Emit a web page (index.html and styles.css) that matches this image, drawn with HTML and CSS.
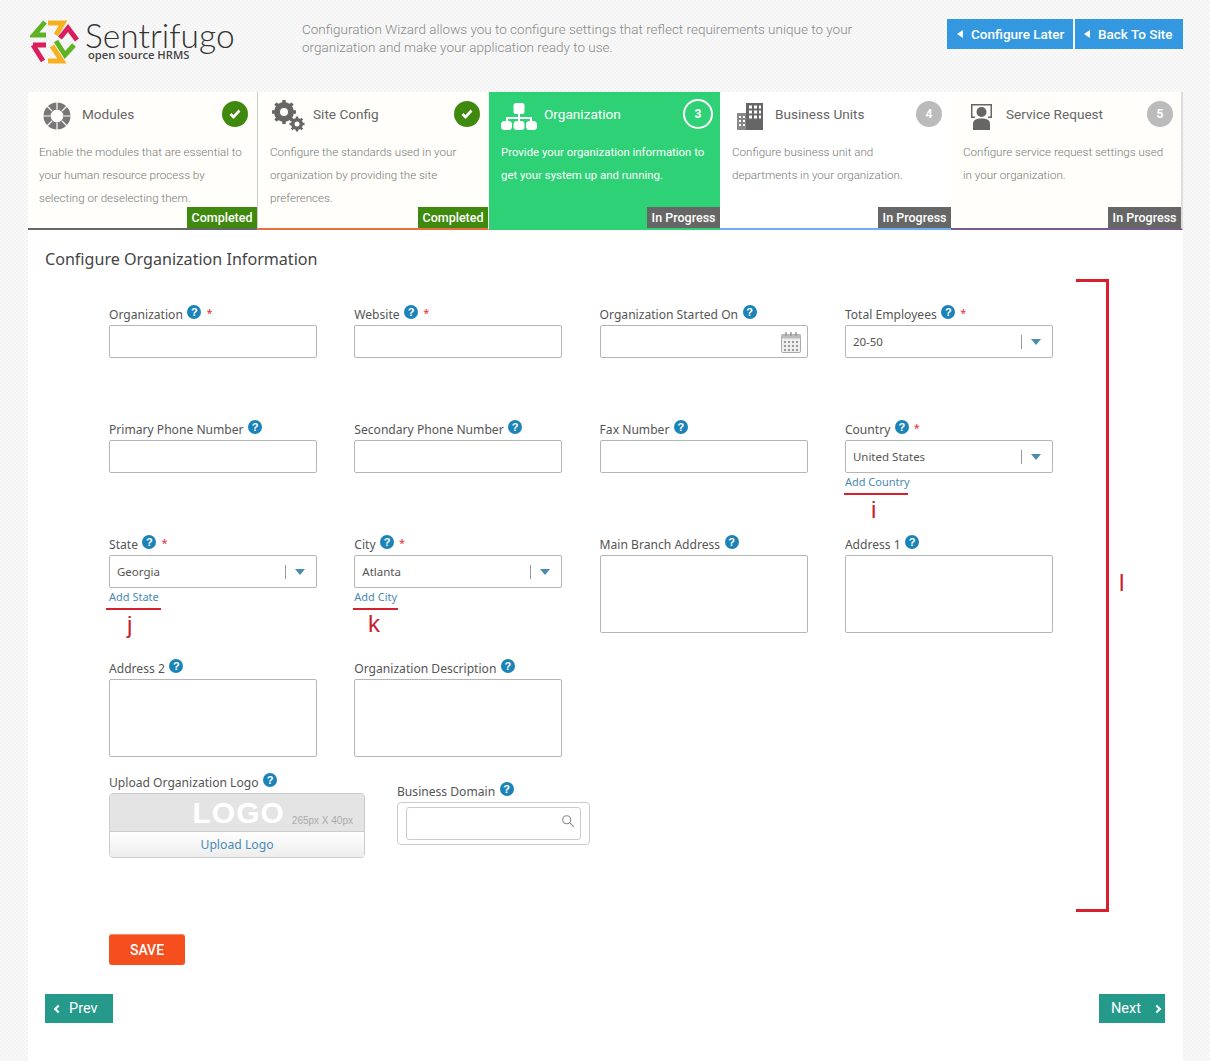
FILE: index.html
```html
<!DOCTYPE html>
<html lang="en">
<head>
    <meta charset="UTF-8">
    <title>Sentrifugo - Configuration Wizard</title>
    <link rel="stylesheet" href="styles.css">
</head>
<body>
    <!-- top bar -->
    <header class="topbar">
        <div class="logo">
            <svg class="logo-mark" width="50" height="44" viewBox="0 0 50 44" fill="none" stroke-width="5">
                <path d="M15 2 L4 15 H16" stroke="#5fb322"/>
                <path d="M18 3 H33 L26 15" stroke="#f7b021"/>
                <path d="M30 18 L38 8 L47 20" stroke="#d81e5b"/>
                <path d="M26 21 L35 35 L44 25" stroke="#5fb322"/>
                <path d="M3 25 H16 M3 25 L13 41" stroke="#d81e5b"/>
                <path d="M22 26 L32 41 H18" stroke="#f7b021"/>
            </svg>
            <div class="logo-text">
                <span class="logo-name">Sentrifugo</span>
                <span class="logo-sub">open source HRMS</span>
            </div>
        </div>
        <p class="intro">Configuration Wizard allows you to configure settings that reflect requirements unique to your organization and make your application ready to use.</p>
        <div class="top-buttons">
            <a class="top-btn top-btn-later">Configure Later</a>
            <a class="top-btn top-btn-back">Back To Site</a>
        </div>
    </header>

    <main class="wrap">
        <!-- wizard steps -->
        <div class="steps">
            <div class="step step-1">
                <div class="step-head">
                    <svg class="step-icon" width="28" height="28" viewBox="0 0 28 28" fill="none">
                        <circle cx="14" cy="14" r="10" stroke="#777" stroke-width="7"/>
                        <path d="M14 0V7M14 21V28M0 14H7M21 14H28M4 4L9 9M19 19L24 24M24 4L19 9M9 19L4 24" stroke="#fffefa" stroke-width="1.2"/>
                    </svg>
                    <span class="step-title">Modules</span>
                    <span class="step-num done">
                        <svg width="12" height="10" viewBox="0 0 12 10" fill="none"><path d="M1.5 5L4.5 8L10.5 1.5" stroke="#fff" stroke-width="2.6"/></svg>
                    </span>
                </div>
                <p class="step-text">Enable the modules that are essential to your human resource process by selecting or deselecting them.</p>
                <span class="badge badge-done">Completed</span>
            </div>
            <div class="step step-2">
                <div class="step-head">
                    <svg class="step-icon" width="36" height="32" viewBox="0 0 36 32" fill="none">
                        <circle cx="14" cy="12" r="7.5" stroke="#666" stroke-width="5"/>
                        <path d="M14 0V24M2 12H26M5.5 3.500L22.500 20.500M22.500 3.500L5.500 20.500" stroke="#666" stroke-width="3.500"/>
                        <circle cx="14" cy="12" r="4" fill="#fffefa"/>
                        <circle cx="27" cy="24" r="4.500" stroke="#666" stroke-width="3"/>
                        <path d="M27 16.500V31.500M19.500 24H34.500M21.700 18.700L32.300 29.300M32.300 18.700L21.700 29.300" stroke="#666" stroke-width="2.400"/>
                        <circle cx="27" cy="24" r="2.500" fill="#fffefa"/>
                    </svg>
                    <span class="step-title">Site Config</span>
                    <span class="step-num done">
                        <svg width="12" height="10" viewBox="0 0 12 10" fill="none"><path d="M1.5 5L4.5 8L10.5 1.5" stroke="#fff" stroke-width="2.6"/></svg>
                    </span>
                </div>
                <p class="step-text">Configure the standards used in your organization by providing the site preferences.</p>
                <span class="badge badge-done">Completed</span>
            </div>
            <div class="step step-3">
                <div class="step-head">
                    <svg class="step-icon" width="36" height="27" viewBox="0 0 36 27" fill="#fff">
                        <rect x="12.500" y="0" width="11" height="11" rx="2.500"/>
                        <path d="M17 10H19V14H31V19H29V16H19V19H17V16H7V19H5V14H17Z"/>
                        <rect x="0" y="18" width="11" height="9" rx="3.500"/>
                        <rect x="12.500" y="18" width="11" height="9" rx="3.500"/>
                        <rect x="25" y="18" width="11" height="9" rx="3.500"/>
                    </svg>
                    <span class="step-title">Organization</span>
                    <span class="step-num current">3</span>
                </div>
                <p class="step-text">Provide your organization information to get your system up and running.</p>
                <span class="badge">In Progress</span>
            </div>
            <div class="step step-4">
                <div class="step-head">
                    <svg class="step-icon" width="26" height="27" viewBox="0 0 26 27">
                        <rect x="0" y="10" width="10" height="17" fill="#888"/>
                        <rect x="9" y="0" width="17" height="27" fill="#666"/>
                        <path d="M12 2.500h3v3h-3zM17 2.500h3v3h-3zM22 2.500h2v3h-2zM12 7.500h3v3h-3zM17 7.500h3v3h-3zM22 7.500h2v3h-2zM12 12.500h3v3h-3zM17 12.500h3v3h-3zM22 12.500h2v3h-2zM2 13h2v2h-2zM6 13h2v2h-2zM2 17h2v2h-2zM6 17h2v2h-2zM2 21h2v2h-2zM6 21h2v2h-2z" fill="#fff"/>
                    </svg>
                    <span class="step-title">Business Units</span>
                    <span class="step-num">4</span>
                </div>
                <p class="step-text">Configure business unit and departments in your organization.</p>
                <span class="badge">In Progress</span>
            </div>
            <div class="step step-5">
                <div class="step-head">
                    <svg class="step-icon" width="23" height="27" viewBox="0 0 23 27">
                        <path d="M1 1H22V15H18V13.500H20.500V2.500H2.500V13.500H5V15H1Z" fill="#666"/>
                        <circle cx="11.500" cy="9" r="5" fill="#666"/>
                        <path d="M3 27V21C3 17 6 15.500 11.500 15.500S20 17 20 21V27Z" fill="#666"/>
                    </svg>
                    <span class="step-title">Service Request</span>
                    <span class="step-num">5</span>
                </div>
                <p class="step-text">Configure service request settings used in your organization.</p>
                <span class="badge">In Progress</span>
            </div>
        </div>

        <h2 class="form-title">Configure Organization Information</h2>

        <form class="form-grid">
            <div class="field">
                <label class="lbl">Organization <i class="help">?</i> <b class="req">*</b></label>
                <input class="txt" type="text">
            </div>
            <div class="field">
                <label class="lbl">Website <i class="help">?</i> <b class="req">*</b></label>
                <input class="txt" type="text">
            </div>
            <div class="field">
                <label class="lbl">Organization Started On <i class="help">?</i></label>
                <div class="date-box">
                    <svg width="20" height="22" viewBox="0 0 20 22" fill="none">
                        <rect x="0.500" y="3.500" width="19" height="18" rx="1" fill="#eee" stroke="#aaa"/>
                        <rect x="0.500" y="3.500" width="19" height="4" fill="#bbb"/>
                        <path d="M5 1V5M10 1V5M15 1V5" stroke="#999" stroke-width="1.500"/>
                        <path d="M3 10h2v2H3zM7 10h2v2H7zM11 10h2v2h-2zM15 10h2v2h-2zM3 14h2v2H3zM7 14h2v2H7zM11 14h2v2h-2zM15 14h2v2h-2zM3 18h2v2H3zM7 18h2v2H7zM11 18h2v2h-2zM15 18h2v2h-2z" fill="#999"/>
                    </svg>
                </div>
            </div>
            <div class="field">
                <label class="lbl">Total Employees <i class="help">?</i> <b class="req">*</b></label>
                <div class="sel"><span>20-50</span><i class="sel-arrow"></i></div>
            </div>

            <div class="field">
                <label class="lbl">Primary Phone Number <i class="help">?</i></label>
                <input class="txt" type="text">
            </div>
            <div class="field">
                <label class="lbl">Secondary Phone Number <i class="help">?</i></label>
                <input class="txt" type="text">
            </div>
            <div class="field">
                <label class="lbl">Fax Number <i class="help">?</i></label>
                <input class="txt" type="text">
            </div>
            <div class="field">
                <label class="lbl">Country <i class="help">?</i> <b class="req">*</b></label>
                <div class="sel"><span>United States</span><i class="sel-arrow"></i></div>
                <a class="add-link">Add Country</a>
            </div>

            <div class="field">
                <label class="lbl">State <i class="help">?</i> <b class="req">*</b></label>
                <div class="sel"><span>Georgia</span><i class="sel-arrow"></i></div>
                <a class="add-link">Add State</a>
            </div>
            <div class="field">
                <label class="lbl">City <i class="help">?</i> <b class="req">*</b></label>
                <div class="sel"><span>Atlanta</span><i class="sel-arrow"></i></div>
                <a class="add-link">Add City</a>
            </div>
            <div class="field">
                <label class="lbl">Main Branch Address <i class="help">?</i></label>
                <textarea class="area"></textarea>
            </div>
            <div class="field">
                <label class="lbl">Address 1 <i class="help">?</i></label>
                <textarea class="area"></textarea>
            </div>

            <div class="field">
                <label class="lbl">Address 2 <i class="help">?</i></label>
                <textarea class="area"></textarea>
            </div>
            <div class="field">
                <label class="lbl">Organization Description <i class="help">?</i></label>
                <textarea class="area"></textarea>
            </div>
        </form>

        <div class="upload-row">
            <div class="upload-field">
                <label class="lbl">Upload Organization Logo <i class="help">?</i></label>
                <div class="upload-box">
                    <div class="upload-top"><span class="upload-logo">LOGO</span><span class="upload-size">265px X 40px</span></div>
                    <a class="upload-link">Upload Logo</a>
                </div>
            </div>
            <div class="domain-field">
                <label class="lbl">Business Domain <i class="help">?</i></label>
                <div class="domain-box">
                    <div class="domain-input">
                        <svg width="12" height="12" viewBox="0 0 12 12" fill="none" stroke="#888" stroke-width="1.100"><circle cx="4.700" cy="4.700" r="4"/><path d="M7.700 7.700L11.700 11.700"/></svg>
                    </div>
                </div>
            </div>
        </div>

        <button class="save-btn" type="button">SAVE</button>

        <div class="nav-row">
            <a class="nav-btn nav-prev"><span class="chev chev-left"></span>Prev</a>
            <a class="nav-btn nav-next">Next<span class="chev chev-right"></span></a>
        </div>
    </main>

    <!-- red markup drawn on top of the screenshot -->
    <div class="mark-line mark-i"></div>
    <span class="mark-letter letter-i">i</span>
    <div class="mark-line mark-j"></div>
    <span class="mark-letter letter-j">j</span>
    <div class="mark-line mark-k"></div>
    <span class="mark-letter letter-k">k</span>
    <div class="mark-bracket"></div>
    <span class="mark-letter letter-l">l</span>
</body>
</html>
```

FILE: styles.css
```css
* {
    box-sizing: border-box;
}
body {
    margin: 0;
    position: relative;
    height: 1061px;
    overflow: hidden;
    font-family: "Noto Sans", sans-serif;
    background-color: #f6f6f6;
    background-image: repeating-conic-gradient(#f3f3f3 0 25%, #f9f9f9 0 50%);
    background-size: 4px 4px;
}

/* top bar */
.topbar {
    display: flex;
    height: 92px;
    padding-left: 30px;
}
.logo {
    display: flex;
    width: 272px;
    padding-top: 20px;
}
.logo-mark {
    flex: none;
}
.logo-text {
    display: flex;
    flex-direction: column;
    margin: 1px 0 0 5px;
}
.logo-name {
    font-family: "Lato", sans-serif;
    font-weight: 300;
    font-size: 33.5px;
    line-height: 28px;
    color: #333;
}
.logo-sub {
    font-family: "Open Sans", sans-serif;
    font-weight: 600;
    font-size: 11.2px;
    line-height: 12px;
    margin-left: 3px;
    color: #444;
}
.intro {
    width: 570px;
    margin: 20px 0 0;
    font-family: "Roboto", sans-serif;
    font-weight: 300;
    font-size: 13.5px;
    line-height: 18px;
    color: #888;
}
.top-buttons {
    display: flex;
    gap: 2px;
    margin: 19px 0 0 75px;
}
.top-btn {
    display: flex;
    align-items: center;
    height: 30px;
    background-color: #3498e0;
    color: #fff;
    font-family: "Roboto", sans-serif;
    font-weight: 500;
    font-size: 13.5px;
}
.top-btn::before {
    content: "";
    border-style: solid;
    border-width: 4px 6px 4px 0;
    border-color: transparent #fff transparent transparent;
    margin-right: 8px;
}
.top-btn-later {
    width: 126px;
    padding-left: 10px;
}
.top-btn-back {
    width: 108px;
    padding-left: 9px;
}

/* main white panel */
.wrap {
    width: 1155px;
    height: 969px;
    margin-left: 28px;
    background-color: #fff;
}

/* steps */
.steps {
    display: flex;
    height: 138px;
    font-family: "Roboto", sans-serif;
}
.step {
    position: relative;
    padding-left: 12px;
    background-color: #fffefa;
    border-bottom: 2px solid #666;
}
.step-1 {
    width: 230px;
    padding-left: 11px;
    border-right: 1px solid #ccc;
}
.step-2 {
    width: 231px;
    border-right: 1px solid #fffefa;
    border-bottom-color: #e8703a;
}
.step-3 {
    width: 231px;
    background-color: #2ed176;
    border-bottom-color: #2ed176;
}
.step-4 {
    width: 231px;
    background-color: #fff;
    border-bottom-color: #6cb0ef;
}
.step-5 {
    width: 232px;
    border-right: 2px solid #ddd;
    border-bottom-color: #7a5a8a;
}
.step-head {
    display: flex;
    align-items: center;
    height: 44px;
}
.step-icon {
    margin-top: 4px;
}
.step-1 .step-head {
    padding-left: 4px;
}
.step-1 .step-icon {
    margin-right: 11px;
}
.step-2 .step-icon {
    margin-right: 7px;
}
.step-3 .step-icon {
    margin-right: 7px;
}
.step-4 .step-head {
    padding-left: 5px;
}
.step-4 .step-icon {
    margin-right: 12px;
}
.step-5 .step-head {
    padding-left: 7px;
}
.step-5 .step-icon {
    margin-right: 13px;
}
.step-title {
    flex: 1;
    font-size: 13.6px;
    color: #666;
}
.step-num {
    display: flex;
    align-items: center;
    justify-content: center;
    flex: none;
    width: 26px;
    height: 26px;
    margin-right: 8px;
    border-radius: 50%;
    background-color: #bbb;
    color: #fff;
    font-size: 12px;
    font-weight: 700;
}
.step-4 .step-num {
    margin-right: 9px;
}
.step-1 .step-num {
    margin-right: 9px;
}
.step-num.done {
    background-color: #3f8a0e;
}
.step-num.current {
    width: 30px;
    height: 30px;
    margin-right: 7px;
    background: none;
    border: 2px solid #fff;
}
.step-text {
    margin: 5px 0 0;
    padding-right: 8px;
    font-weight: 300;
    font-size: 11.6px;
    line-height: 23px;
    color: #777;
}
.step-3 .step-title,
.step-3 .step-text {
    color: #fff;
}
.step-3 .step-text {
    font-size: 11.4px;
    font-weight: 400;
}
.step-4 .step-text {
    padding-right: 40px;
}
.badge {
    position: absolute;
    right: 0;
    bottom: 0;
    height: 21px;
    padding: 0 4.5px;
    background-color: #666;
    color: #fff;
    font-size: 12.500px;
    font-weight: 500;
    line-height: 22px;
}
.badge-done {
    background-color: #3f8a0e;
}

/* form */
.form-title {
    margin: 17px 0 35px 17px;
    font-size: 16.1px;
    font-weight: 400;
    line-height: 24px;
    color: #444;
}
.form-grid {
    display: grid;
    grid-template-columns: repeat(4, 208px);
    grid-template-rows: 115px 115px 124px 114px;
    column-gap: 37.3px;
    margin-left: 81px;
}
.lbl {
    display: flex;
    height: 19px;
    font-size: 12.1px;
    line-height: 17px;
    color: #555;
    white-space: nowrap;
}
.help {
    display: block;
    flex: none;
    width: 14px;
    height: 14px;
    margin: -1px 0 0 4.5px;
    border-radius: 50%;
    background-color: #1b83b8;
    color: #fff;
    font-family: "Liberation Sans", sans-serif;
    font-style: normal;
    font-weight: 700;
    font-size: 11px;
    line-height: 14px;
    text-align: center;
}
.req {
    margin-left: 5px;
    color: #e0303a;
    font-size: 11px;
    font-weight: 400;
    line-height: 14px;
}
.txt,
.sel,
.date-box,
.area {
    display: block;
    width: 208px;
    height: 33px;
    border: 1px solid #b5b5b5;
    border-radius: 2px;
    background-color: #fff;
    margin: 0;
}
.area {
    height: 78px;
    resize: none;
}
.date-box {
    display: flex;
    align-items: center;
    justify-content: flex-end;
    padding-right: 6px;
}
.sel {
    display: flex;
    align-items: center;
    padding-left: 7px;
    font-size: 11.5px;
    color: #555;
}
.sel span {
    flex: 1;
}
.sel-arrow {
    display: block;
    position: relative;
    width: 1px;
    height: 14px;
    margin-right: 30px;
    background-color: #999;
}
.sel-arrow::after {
    content: "";
    position: absolute;
    left: 10px;
    top: 4px;
    border-style: solid;
    border-width: 6px 5px 0;
    border-color: #4a8cab transparent transparent;
}
.add-link {
    display: block;
    margin-top: 1px;
    font-size: 11px;
    line-height: 16px;
    color: #4a8ab5;
}

/* upload + domain row */
.upload-row {
    display: flex;
    margin-left: 81px;
}
.upload-field {
    width: 288px;
}
.upload-box {
    width: 256px;
    height: 65px;
    border: 1px solid #ccc;
    border-radius: 4px;
    overflow: hidden;
}
.upload-top {
    display: flex;
    align-items: flex-end;
    justify-content: flex-end;
    height: 38px;
    padding-right: 11px;
    background-color: #e4e4e4;
    border-bottom: 1px solid #ccc;
}
.upload-logo {
    font-family: "Liberation Sans", sans-serif;
    font-weight: 700;
    font-size: 30px;
    line-height: 36px;
    letter-spacing: 1px;
    color: #fff;
    margin-right: 7px;
}
.upload-size {
    font-family: "Liberation Sans", sans-serif;
    font-size: 10px;
    line-height: 20px;
    color: #aaa;
}
.upload-link {
    display: block;
    height: 26px;
    font-size: 12.2px;
    line-height: 25px;
    text-align: center;
    color: #4a8ab5;
    background: linear-gradient(#fff, #ececec);
}
.domain-field {
    margin-top: 9px;
}
.domain-box {
    width: 193px;
    height: 43px;
    padding: 4px 8px;
    border: 1px solid #ccc;
    border-radius: 4px;
}
.domain-input {
    display: flex;
    align-items: center;
    justify-content: flex-end;
    height: 33px;
    padding: 0 6px 5px 0;
    border: 1px solid #ccc;
    border-radius: 3px;
}

/* buttons */
.save-btn {
    display: block;
    width: 76px;
    height: 31px;
    margin: 76px 0 0 81px;
    border: 0;
    border-top: 1px solid #f58a64;
    border-radius: 3px;
    background-color: #f44f1d;
    color: #fff;
    font-family: "Roboto", sans-serif;
    font-weight: 500;
    font-size: 14px;
}
.nav-row {
    display: flex;
    justify-content: space-between;
    margin: 29px 18px 0 17px;
}
.nav-btn {
    display: flex;
    align-items: center;
    height: 29px;
    background-color: #25998a;
    color: #fff;
    font-family: "Roboto", sans-serif;
    font-size: 14.5px;
}
.nav-prev {
    width: 68px;
    padding-left: 10px;
    gap: 8px;
}
.nav-next {
    width: 66px;
    padding: 0 5px 0 12px;
    justify-content: space-between;
}
.chev {
    display: block;
    width: 6px;
    height: 6px;
    border-top: 2px solid #fff;
}
.chev-left {
    border-left: 2px solid #fff;
    transform: rotate(-45deg);
}
.chev-right {
    border-right: 2px solid #fff;
    transform: rotate(45deg);
}

/* red markup */
.mark-line {
    position: absolute;
    height: 2px;
    background-color: #d81f2e;
}
.mark-i {
    left: 844px;
    top: 493px;
    width: 64px;
}
.mark-j {
    left: 106px;
    top: 608px;
    width: 55px;
}
.mark-k {
    left: 353px;
    top: 608px;
    width: 45px;
}
.mark-bracket {
    position: absolute;
    left: 1076px;
    top: 279px;
    width: 33px;
    height: 633px;
    border: solid #d81f2e;
    border-width: 3px 3px 3px 0;
}
.mark-letter {
    position: absolute;
    font-family: "Liberation Sans", sans-serif;
    font-size: 24px;
    line-height: 24px;
    color: #c9202e;
}
.letter-i {
    left: 871px;
    top: 498px;
}
.letter-j {
    left: 127px;
    top: 613px;
}
.letter-k {
    left: 368px;
    top: 612px;
}
.letter-l {
    left: 1119px;
    top: 571px;
}
```
